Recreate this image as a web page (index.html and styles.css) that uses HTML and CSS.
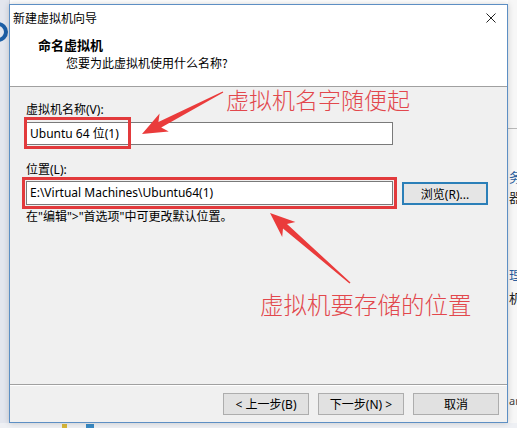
FILE: index.html
```html
<!DOCTYPE html>
<html lang="zh-CN">
<head>
    <meta charset="UTF-8">
    <title>新建虚拟机向导</title>
    <link rel="stylesheet" href="styles.css">
</head>
<body>
    <!-- main application window behind the wizard -->
    <div class="backdrop">
        <div class="app-logo"></div>
        <div class="side-panel">
            <div class="side-rule"></div>
            <span class="frag link" style="top: 168px">务</span>
            <span class="frag" style="top: 188px">器</span>
            <span class="frag link" style="top: 266px">理</span>
            <span class="frag" style="top: 289px">机</span>
            <span class="frag small" style="top: 392px">ar</span>
        </div>
        <div class="taskbar">
            <span class="tray yellow"></span>
            <span class="tray blue"></span>
        </div>
    </div>

    <div class="dialog">
        <div class="titlebar">
            <span class="title">新建虚拟机向导</span>
            <svg class="close" width="10" height="10" viewBox="0 0 10 10">
                <path d="M0.5 0.5 L9.5 9.5 M9.5 0.5 L0.5 9.5" stroke="#222" stroke-width="1" fill="none"/>
            </svg>
        </div>
        <div class="header">
            <div class="header-title">命名虚拟机</div>
            <div class="header-sub">您要为此虚拟机使用什么名称?</div>
        </div>
        <div class="content">
            <label class="field-label">虚拟机名称(V):</label>
            <div class="textbox name-box">Ubuntu 64 位(1)</div>

            <label class="field-label loc-label">位置(L):</label>
            <div class="loc-row">
                <div class="textbox">E:\Virtual Machines\Ubuntu64(1)</div>
                <button class="btn browse">浏览(R)...</button>
            </div>
            <div class="hint">在"编辑"&gt;"首选项"中可更改默认位置。</div>
        </div>
        <div class="footer">
            <button class="btn">&lt; 上一步(B)</button>
            <button class="btn">下一步(N) &gt;</button>
            <button class="btn">取消</button>
        </div>
    </div>

    <!-- red annotations drawn on top -->
    <div class="mark mark-name"></div>
    <div class="mark mark-loc"></div>
    <div class="note note-name">虚拟机名字随便起</div>
    <div class="note note-loc">虚拟机要存储的位置</div>
    <svg class="arrows" width="517" height="428" viewBox="0 0 517 428">
        <polygon fill="#ea3b3b" points="142,134 168.8,131.4 161.2,127.5 223.3,92.6 222.7,91.4 158.4,122.1 159.6,113.6"/>
        <polygon fill="#ea3b3b" points="270,213 295.4,222.0 287.0,223.9 350.5,282.6 349.5,283.4 283.0,228.5 282.2,237.0"/>
    </svg>
</body>
</html>
```

FILE: styles.css
```css
* {
    margin: 0;
    padding: 0;
    box-sizing: border-box;
}

body {
    position: relative;
    width: 517px;
    height: 428px;
    overflow: hidden;
    background: #ffffff;
    font-family: "Noto Sans", "Noto Sans CJK SC", sans-serif;
    font-size: 12px;
    color: #000;
}

/* ---- window behind ---- */

.backdrop {
    position: absolute;
    inset: 0;
    background: #ffffff;
}

.backdrop::before {
    content: "";
    position: absolute;
    left: 0;
    top: 0;
    width: 9px;
    height: 428px;
    background: #e3e6ee;
    border-right: 1px solid #c9cfdc;
}

.app-logo {
    position: absolute;
    left: -12px;
    top: 22px;
    width: 20px;
    height: 20px;
    border: 4px solid #1d5fa6;
    border-radius: 50%;
}

.side-panel {
    position: absolute;
    left: 508px;
    top: 0;
    width: 9px;
    height: 428px;
    background: #f7f7f7;
}

.side-rule {
    position: absolute;
    left: 0;
    top: 128px;
    width: 9px;
    border-top: 1px solid #b9b9b9;
}

.frag {
    position: absolute;
    left: 1px;
    font-family: "Noto Sans CJK SC", sans-serif;
    font-size: 13px;
    line-height: 18px;
    color: #222;
}

.frag.link {
    color: #2b5f9e;
}

.frag.small {
    font-family: "Noto Sans", sans-serif;
    font-size: 11px;
    color: #444;
}

.taskbar {
    position: absolute;
    left: 0;
    top: 423px;
    width: 517px;
    height: 5px;
    background: #eef0f4;
}

.tray {
    position: absolute;
    top: 1px;
    width: 5px;
    height: 4px;
}

.tray.yellow {
    left: 62px;
    background: #d8b83a;
}

.tray.blue {
    left: 86px;
    width: 8px;
    background: #3a8ac4;
}

/* ---- wizard dialog ---- */

.dialog {
    position: absolute;
    left: 9px;
    top: 4px;
    width: 499px;
    height: 419px;
    border: 1px solid #5d8fc4;
    background: #f0f0f0;
    box-shadow: 0 0 6px rgba(0, 0, 0, 0.18);
    display: flex;
    flex-direction: column;
}

.titlebar {
    height: 25px;
    background: #fff;
    display: flex;
    align-items: center;
    justify-content: space-between;
    padding: 0 11px 0 3px;
}

.title {
    font-family: "Noto Sans CJK SC", sans-serif;
    font-size: 12px;
    line-height: 25px;
}

.header {
    height: 57px;
    background: #fff;
    border-bottom: 1px solid #a0a0a0;
    padding: 6px 0 0 28px;
}

.header-title {
    font-family: "Noto Sans CJK SC", sans-serif;
    font-weight: 700;
    font-size: 13px;
    line-height: 18px;
}

.header-sub {
    font-family: "Noto Sans CJK SC", sans-serif;
    font-size: 12px;
    line-height: 16px;
    margin-top: 1px;
    padding-left: 28px;
}

.content {
    flex: 1;
    padding: 15px 0 0 16px;
    display: flex;
    flex-direction: column;
    align-items: flex-start;
}

.field-label {
    line-height: 16px;
}

.loc-label {
    margin-top: 17px;
}

.textbox {
    width: 367px;
    height: 24px;
    margin-top: 3px;
    background: #fff;
    border: 1px solid #7a7a7a;
    padding-left: 3px;
    line-height: 22px;
    white-space: nowrap;
}

.name-box {
    height: 23px;
    margin-top: 4px;
}

.loc-row {
    display: flex;
    align-items: center;
    gap: 9px;
}

.hint {
    margin-top: 4px;
    line-height: 16px;
}

.btn {
    width: 86px;
    height: 22px;
    background: #e1e1e1;
    border: 1px solid #adadad;
    font-family: "Noto Sans", "Noto Sans CJK SC", sans-serif;
    font-size: 12px;
    color: #000;
}

.browse {
    height: 23px;
    margin-top: 4px;
    border: 2px solid #2b7fb8;
    background: #e5e5e5;
}

.footer {
    height: 38px;
    border-top: 1px solid #a0a0a0;
    box-shadow: inset 0 1px 0 #fff;
    display: flex;
    justify-content: flex-end;
    align-items: flex-start;
    gap: 9px;
    padding: 8px 8px 0 0;
}

/* ---- annotations ---- */

.mark {
    position: absolute;
    border: 3px solid #e23a3c;
}

.mark-name {
    left: 24px;
    top: 117px;
    width: 107px;
    height: 32px;
}

.mark-loc {
    left: 22px;
    top: 177px;
    width: 375px;
    height: 32px;
}

.note {
    position: absolute;
    font-family: "Noto Sans CJK SC", sans-serif;
    font-weight: 300;
    color: #e2474c;
    white-space: nowrap;
}

.note-name {
    left: 226px;
    top: 85px;
    font-size: 23px;
    line-height: 28px;
}

.note-loc {
    left: 260px;
    top: 290px;
    font-size: 23.5px;
    line-height: 28px;
}

.arrows {
    position: absolute;
    left: 0;
    top: 0;
}
```
